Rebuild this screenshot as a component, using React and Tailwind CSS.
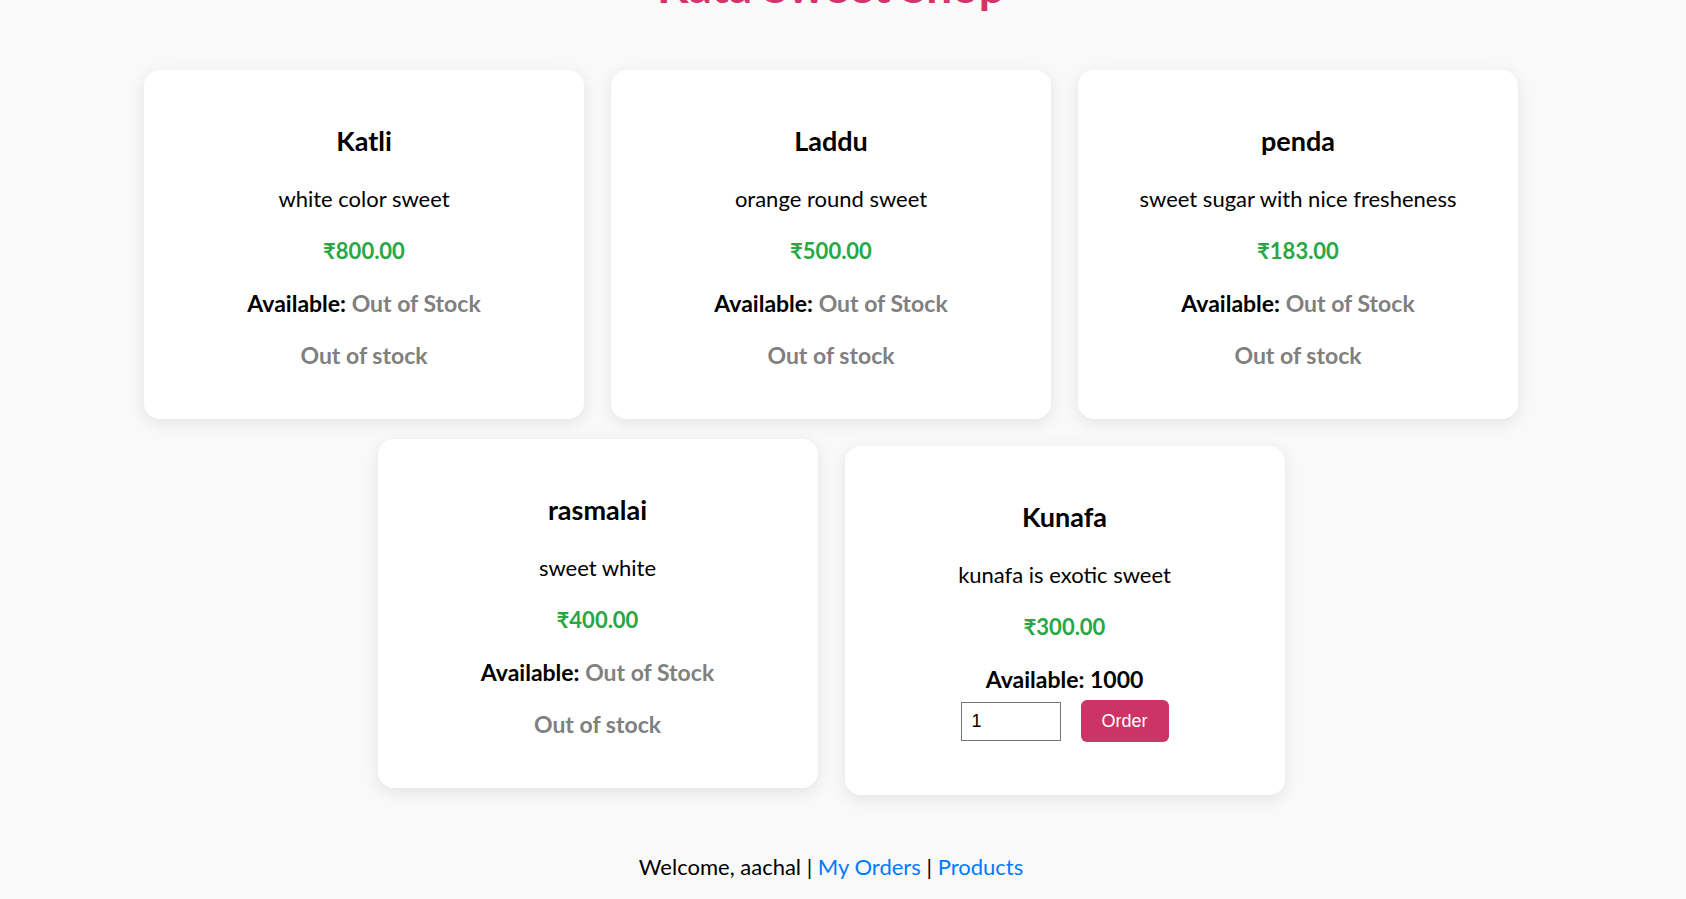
const sweets = [
  { name: "Katli", desc: "white color sweet", price: 800, qty: 0 },
  { name: "Laddu", desc: "orange round sweet", price: 500, qty: 0 },
  { name: "penda", desc: "sweet sugar with nice fresheness", price: 183, qty: 0 },
  { name: "rasmalai", desc: "sweet white", price: 400, qty: 0, hover: true },
  { name: "Kunafa", desc: "kunafa is exotic sweet", price: 300, qty: 1000 },
];

function SweetCard({ sweet }) {
  const inStock = sweet.qty > 0;
  return (
    <div
      className={
        "w-[440px] h-[349px] bg-white rounded-2xl shadow-[0_4px_16px_rgba(0,0,0,0.09)] pt-[53px] flex flex-col items-center text-center " +
        (sweet.hover ? "-translate-y-[7px]" : "")
      }
    >
      <h2 className="text-[27px] leading-[36px] font-bold text-black">{sweet.name}</h2>
      <p className="mt-[24px] text-[22px] leading-[32px] text-black">{sweet.desc}</p>
      <p className="mt-[20px] text-[22px] leading-[32px] font-bold text-[#28a745]">
        ₹{sweet.price.toFixed(2)}
      </p>
      <p className="mt-[20px] text-[23px] leading-[32px] font-bold text-black">
        Available:{" "}
        {inStock ? sweet.qty : <span className="text-[#808080]">Out of Stock</span>}
      </p>
      {inStock ? (
        <div className="mt-[5px] flex items-center gap-[20px] font-['Liberation_Sans',Arial,sans-serif]">
          <input
            type="number"
            defaultValue={1}
            min={1}
            className="w-[100px] h-[39px] border border-[#767676] px-[10px] text-[18px] text-black bg-white outline-none [appearance:textfield]"
          />
          <button className="w-[88px] h-[42px] rounded-md bg-[#cc3366] text-white text-[18px]">
            Order
          </button>
        </div>
      ) : (
        <p className="mt-[20px] text-[23px] leading-[32px] font-bold text-[#808080]">Out of stock</p>
      )}
    </div>
  );
}

export default function App() {
  return (
    <div className="min-h-screen bg-[#f9f9f9] font-['Lato','Noto_Sans',sans-serif] overflow-hidden">
      <div className="w-[1662px] flex flex-col items-center">
        <h1 className="-mt-[40px] text-[46px] leading-[52px] font-bold text-[#d6336c]">Kata Sweet Shop</h1>
        <div className="mt-[58px] w-[1374px] flex flex-wrap justify-center gap-[27px]">
          {sweets.map((s) => (
            <SweetCard key={s.name} sweet={s} />
          ))}
        </div>
        <p className="mt-[56px] text-[22px] leading-[32px] text-black">
          Welcome, aachal |{" "}
          <a href="#" className="text-[#007bff]">My Orders</a> |{" "}
          <a href="#" className="text-[#007bff]">Products</a>
        </p>
      </div>
    </div>
  );
}
